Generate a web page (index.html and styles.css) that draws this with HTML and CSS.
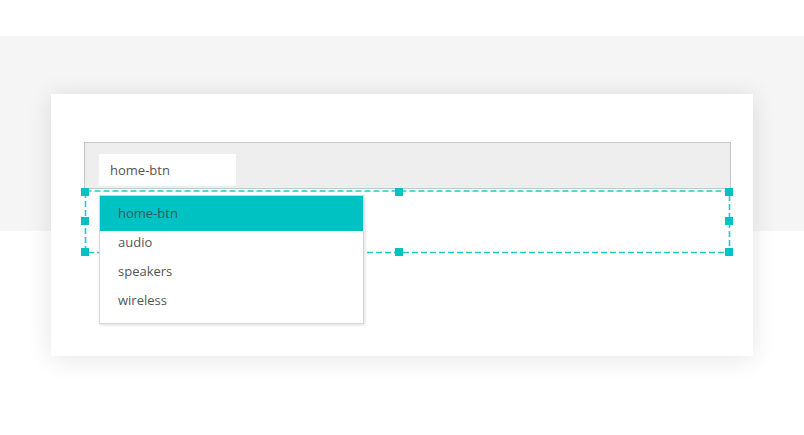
FILE: index.html
```html
<!DOCTYPE html>
<html lang="en">
<head>
    <meta charset="UTF-8">
    <meta name="viewport" content="width=device-width, initial-scale=1.0">
    <title>Element picker</title>
    <link rel="stylesheet" href="styles.css">
</head>
<body>
    <div class="band"></div>
    <div class="card">
        <div class="editor">
            <div class="bar">
                <div class="tab">home-btn</div>
            </div>
            <div class="drop-zone"></div>

            <svg class="selection" width="653" height="71" viewBox="0 0 653 71">
                <rect x="4.5" y="5" width="644" height="61.5" fill="none" stroke="#1fcaca" stroke-width="1.6" stroke-dasharray="6 3"/>
                <rect x="0" y="2" width="8" height="8" fill="#00c2c2"/>
                <rect x="314" y="2" width="8" height="8" fill="#00c2c2"/>
                <rect x="644" y="2" width="8" height="8" fill="#00c2c2"/>
                <rect x="0" y="31" width="8" height="8" fill="#00c2c2"/>
                <rect x="644" y="31" width="8" height="8" fill="#00c2c2"/>
                <rect x="0" y="62" width="8" height="8" fill="#00c2c2"/>
                <rect x="314" y="62" width="8" height="8" fill="#00c2c2"/>
                <rect x="644" y="62" width="8" height="8" fill="#00c2c2"/>
            </svg>

            <ul class="dropdown">
                <li class="active">home-btn</li>
                <li>audio</li>
                <li>speakers</li>
                <li>wireless</li>
            </ul>
        </div>
    </div>
</body>
</html>
```

FILE: styles.css
```css
html, body {
    min-height: 435px;
}
body {
    margin: 0;
    padding: 94px 0 80px;
    box-sizing: border-box;
    font-family: "Open Sans", "Liberation Sans", sans-serif;
    font-size: 13px;
    color: #555;
    background: #fff;
    position: relative;
}
.band {
    position: absolute;
    top: 36px;
    left: 0;
    right: 0;
    height: 195px;
    background: #f5f5f5;
}
.card {
    position: relative;
    width: 702px;
    height: 262px;
    margin-left: 51px;
    padding: 48px 22px 0 33px;
    box-sizing: border-box;
    background: #fff;
    box-shadow: 0 2px 24px rgba(0, 0, 0, 0.11);
}
.editor {
    position: relative;
}
.bar {
    height: 47px;
    padding: 11px 14px 0;
    box-sizing: border-box;
    border: 1px solid #c6c6c6;
    background: #eeeeee;
}
.tab {
    width: 137px;
    height: 32px;
    line-height: 32px;
    padding-left: 11px;
    box-sizing: border-box;
    background: #fff;
    color: #555;
}
.drop-zone {
    height: 62px;
}
.selection {
    position: absolute;
    left: -3px;
    top: 44px;
    overflow: visible;
}
.dropdown {
    position: absolute;
    left: 15px;
    top: 53px;
    width: 265px;
    margin: 0;
    padding: 0 0 8px;
    box-sizing: border-box;
    list-style: none;
    background: #fff;
    border: 1px solid #d6d6d6;
    box-shadow: 1px 1px 3px rgba(0, 0, 0, 0.14);
}
.dropdown li {
    line-height: 29px;
    padding: 0 18px;
    color: #555;
}
.dropdown li.active {
    line-height: 35px;
    margin-bottom: -3px;
    background: #00c2c2;
    color: #2c5c5c;
}
```
